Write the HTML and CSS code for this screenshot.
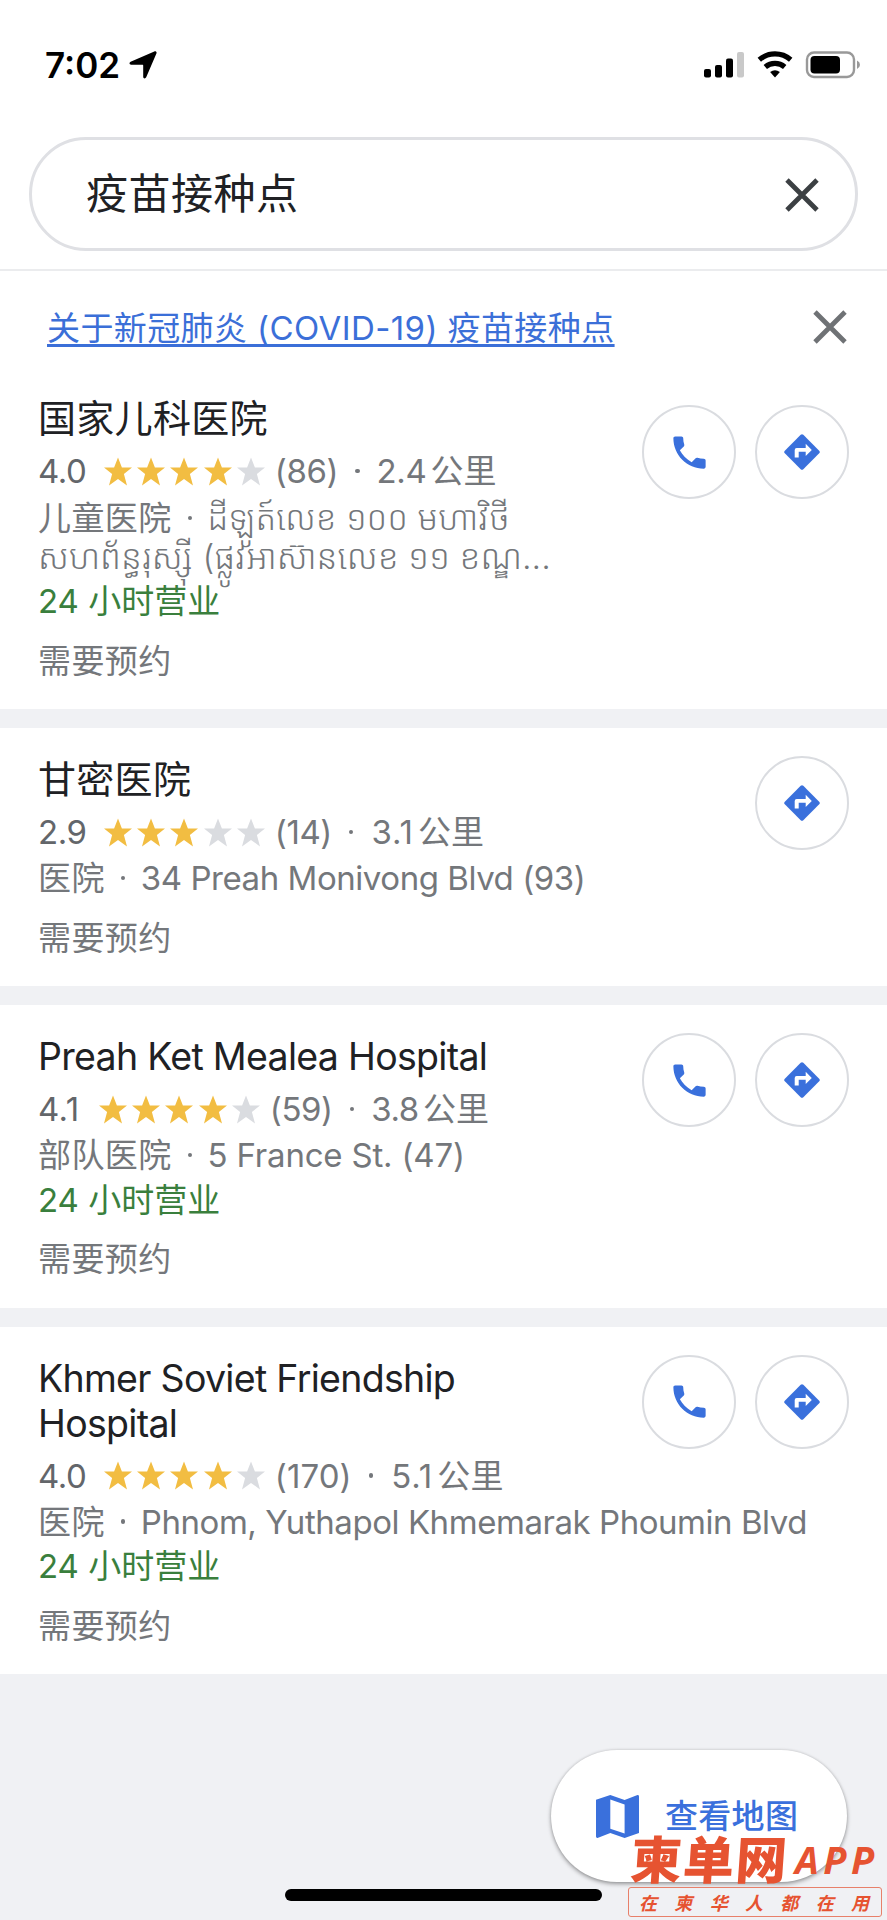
FILE: index.html
```html
<!DOCTYPE html>
<html lang="zh-CN">
<head>
<meta charset="utf-8">
<title>疫苗接种点</title>
<link rel="stylesheet" href="styles.css">
</head>
<body>
<svg class="defs" width="0" height="0">
  <symbol id="star" viewBox="0 0 28 28"><path d="M14 0l3.900 10H28l-8.100 6.500L23 28l-9-6.600L5 28l3.100-11.500L0 10h10.100z"/></symbol>
  <symbol id="phone" viewBox="0 0 24 24"><path d="M6.620 10.790c1.440 2.830 3.760 5.140 6.590 6.590l2.200-2.200c.27-.27.67-.36 1.020-.24 1.120.37 2.330.57 3.570.57.55 0 1 .45 1 1V20c0 .55-.45 1-1 1-9.390 0-17-7.610-17-17 0-.55.45-1 1-1h3.500c.55 0 1 .45 1 1 0 1.250.2 2.450.57 3.570.11.35.03.74-.25 1.020z"/></symbol>
  <symbol id="route" viewBox="0 0 36 36"><path class="route-sign" d="M16.700.8a1.900 1.900 0 0 1 2.600 0l15.900 15.900a1.900 1.900 0 0 1 0 2.600L19.300 35.200a1.900 1.900 0 0 1-2.600 0L.8 19.300a1.900 1.900 0 0 1 0-2.600z"/><path class="route-arrow" d="M10.700 23.500V16q0-2 2-2h9V9.800l6.100 6.200-6.100 6.100v-4.300h-7v5.700z"/></symbol>
</svg>

<header class="top">
  <div class="status">
    <span class="clock">7:02</span>
    <svg class="locate" viewBox="0 0 28 28"><path d="M25.300.4C27 0 28 1 27.400 2.600L17.200 26.300c-.8 1.700-3 1.400-3-.6V14.600c0-.6-.2-.8-.8-.8H2.200c-2 0-2.300-2.200-.6-3z"/></svg>
    <svg class="signals" viewBox="0 0 156 30">
      <rect x="0" y="19" width="7" height="8.500" rx="2"/>
      <rect x="11" y="15" width="7" height="12.500" rx="2"/>
      <rect x="22" y="8.500" width="7" height="19" rx="2"/>
      <rect class="faint" x="33" y="2" width="7" height="25.500" rx="2"/>
      <g class="wifi"><path d="M55.300 9.800a24 24 0 0 1 31.400 0"/><path d="M61.300 17a15 15 0 0 1 19.400 0"/></g>
      <path d="M66.100 22.100a8 8 0 0 1 9.800 0L71 27.600z"/>
      <rect class="shell" x="103" y="2.500" width="47" height="24.500" rx="7"/>
      <rect x="106.500" y="6" width="29.500" height="17.500" rx="4"/>
      <path class="nub" d="M153 10.500q3 1.500 3 4.300t-3 4.300z"/>
    </svg>
  </div>
  <div class="search">
    <span class="query">疫苗接种点</span>
    <svg class="clear" viewBox="0 0 34 34"><path d="M2 2l30 30M32 2L2 32"/></svg>
  </div>
</header>

<main>
  <div class="notice">
    <a class="notice-link">关于新冠肺炎 (COVID-19) 疫苗接种点</a>
    <svg class="dismiss" viewBox="0 0 34 34"><path d="M2 2l30 30M32 2L2 32"/></svg>
  </div>

  <section class="card first">
    <div class="info">
      <h2 class="name cjk">国家儿科医院</h2>
      <div class="rating"><span class="score">4.0</span><span class="stars"><svg><use href="#star"/></svg><svg><use href="#star"/></svg><svg><use href="#star"/></svg><svg><use href="#star"/></svg><svg class="off"><use href="#star"/></svg></span><span>(86)</span><span class="dot"></span><span>2.4</span><span class="unit">公里</span></div>
      <div class="address khmer"><div class="kline">儿童医院<span class="dot"></span><span class="km1">ដីឡូត៍លេខ ១០០ មហាវិថី</span></div><div class="kline km2">សហព័ន្ធរុស្ស៊ី (ផ្លូវអាស៊ានលេខ ១១ ខណ្ឌ...</div></div>
      <div class="hours">24 小时营业</div>
      <div class="note">需要预约</div>
    </div>
    <div class="actions"><span class="round"><svg class="i-phone"><use href="#phone"/></svg></span><span class="round"><svg class="i-route"><use href="#route"/></svg></span></div>
  </section>

  <section class="card">
    <div class="info">
      <h2 class="name cjk">甘密医院</h2>
      <div class="rating"><span class="score">2.9</span><span class="stars"><svg><use href="#star"/></svg><svg><use href="#star"/></svg><svg><use href="#star"/></svg><svg class="off"><use href="#star"/></svg><svg class="off"><use href="#star"/></svg></span><span>(14)</span><span class="dot"></span><span class="loose">3.1</span><span class="unit">公里</span></div>
      <div class="address">医院<span class="dot"></span><span class="latin">34 Preah Monivong Blvd (93)</span></div>
      <div class="note">需要预约</div>
    </div>
    <div class="actions"><span class="round"><svg class="i-route"><use href="#route"/></svg></span></div>
  </section>

  <section class="card">
    <div class="info">
      <h2 class="name">Preah Ket Mealea Hospital</h2>
      <div class="rating"><span class="score narrow">4.1</span><span class="stars"><svg><use href="#star"/></svg><svg><use href="#star"/></svg><svg><use href="#star"/></svg><svg><use href="#star"/></svg><svg class="off"><use href="#star"/></svg></span><span>(59)</span><span class="dot"></span><span>3.8</span><span class="unit">公里</span></div>
      <div class="address">部队医院<span class="dot"></span><span class="latin short">5 France St. (47)</span></div>
      <div class="hours">24 小时营业</div>
      <div class="note">需要预约</div>
    </div>
    <div class="actions"><span class="round"><svg class="i-phone"><use href="#phone"/></svg></span><span class="round"><svg class="i-route"><use href="#route"/></svg></span></div>
  </section>

  <section class="card">
    <div class="info">
      <h2 class="name">Khmer Soviet Friendship<br>Hospital</h2>
      <div class="rating"><span class="score">4.0</span><span class="stars"><svg><use href="#star"/></svg><svg><use href="#star"/></svg><svg><use href="#star"/></svg><svg><use href="#star"/></svg><svg class="off"><use href="#star"/></svg></span><span class="count-wide">(170)</span><span class="dot"></span><span class="loose">5.1</span><span class="unit">公里</span></div>
      <div class="address">医院<span class="dot"></span><span class="latin">Phnom, Yuthapol Khmemarak Phoumin Blvd</span></div>
      <div class="hours">24 小时营业</div>
      <div class="note">需要预约</div>
    </div>
    <div class="actions"><span class="round"><svg class="i-phone"><use href="#phone"/></svg></span><span class="round"><svg class="i-route"><use href="#route"/></svg></span></div>
  </section>
</main>

<div class="map-button">
  <svg class="i-map" viewBox="0 0 43 43"><path fill-rule="evenodd" d="M0 4.800L14.300 0l14.300 5L41.500 0.100Q43 0 43 1.500V38L28.600 43l-14.300-5L1.500 42.900Q0 43 0 41.500zM14.300 4.500V33.700l14.300 4.900V9.500z"/></svg>
  <span class="map-label">查看地图</span>
</div>
<div class="home-bar"></div>
<div class="mark">
  <div class="mark-title"><span class="mark-name">柬单网</span><span class="mark-app">APP</span></div>
  <div class="mark-tag"><span>在</span><span>柬</span><span>华</span><span>人</span><span>都</span><span>在</span><span>用</span></div>
</div>
</body>
</html>
```

FILE: styles.css
```css
* { box-sizing: border-box; }
body {
  margin: 0;
  position: relative;
  width: 887px;
  height: 1920px;
  overflow: hidden;
  background: #f0f1f4;
  color: #74777b;
  font-family: Inter, "Noto Sans CJK SC", "Noto Sans Khmer", "Khmer OS", sans-serif;
  font-size: 33px;
}
svg { display: block; flex: none; }
.defs { position: absolute; }

.top { height: 271px; background: #fff; border-bottom: 2px solid #ebecee; }
.status { display: flex; align-items: center; height: 137px; padding: 0 27px 7px 45px; color: #000; }
.clock { font-size: 35px; font-weight: 600; letter-spacing: 0; width: 84px; padding-bottom: 1px; }
.locate { width: 28px; height: 28px; }
.signals { width: 156px; height: 30px; margin-left: auto; }
.signals .faint { fill: #c9c9c9; }
.wifi { fill: none; stroke: #000; stroke-width: 5.2; }
.shell { fill: none; stroke: #999; stroke-width: 2.4; }
.nub { fill: #999; }
.search {
  display: flex; align-items: center; justify-content: space-between;
  height: 114px; margin: 0 29px; padding: 2px 36px 0 54px;
  border: 3px solid #dfe0e4; border-radius: 57px;
}
.query { font-size: 42px; line-height: 58px; padding-bottom: 2px; letter-spacing: 0.5px; color: #202124; }
.clear { width: 34px; height: 34px; fill: none; stroke: #3c4043; stroke-width: 4.800; }

.notice { display: flex; align-items: center; justify-content: space-between; height: 96px; padding: 22px 40px 4px 47px; background: #fff; }
.notice-link {
  font-size: 33px; line-height: 40px; color: #3b6fd8; letter-spacing: 0.4px; white-space: nowrap;
  text-decoration: underline; text-decoration-thickness: 2.500px; text-underline-offset: 4px;
}
.dismiss { width: 34px; height: 34px; fill: none; stroke: #6f7275; stroke-width: 4.800; margin-top: -3px; }

.card { display: flex; justify-content: space-between; background: #fff; padding: 29px 38px 26px 38px; margin-bottom: 19px; }
.info { white-space: nowrap; min-width: 0; flex: 1; }
.actions { display: flex; gap: 19px; height: 0; margin-top: -1px; }
.first .actions { margin-top: 9px; }
.name { margin: 0 0 8px; font-size: 37.500px; line-height: 45px; font-weight: 400; color: #202124; letter-spacing: -0.7px; }
.name.cjk { font-size: 38px; letter-spacing: 0.3px; }
.rating { display: flex; align-items: center; line-height: 44px; margin-bottom: 2px; letter-spacing: -0.4px; }
.score { color: #63666a; width: 45px; }
.score.narrow { width: 40px; letter-spacing: 0.4px; }
.stars { display: flex; gap: 5.2px; margin: 0 10px 0 21px; }
.stars svg { width: 28px; height: 31px; fill: #f2bd42; }
.stars .off { fill: #dadce0; }
.loose { margin-left: 1px; letter-spacing: 0.9px; }
.count-wide { letter-spacing: 0.1px; }
.unit { margin-left: 4px; letter-spacing: 0.2px; }
.dot { display: inline-block; width: 4.500px; height: 4.500px; margin: 0 17px; border-radius: 50%; background: currentColor; vertical-align: 10px; }
.address .dot { margin: 0 15.500px 0 16px; }
.address { letter-spacing: 0.4px; }
.address .latin { letter-spacing: -0.45px; }
.address .short { letter-spacing: -0.2px; }
.address, .hours { line-height: 44.500px; }
.kline { height: 39px; line-height: 39px; }
.km1, .km2 { font-weight: 300; letter-spacing: 0; }
.km1 { font-size: 33.700px; }
.km2 { font-size: 34.100px; }
.khmer { padding: 3px 0; }
.hours { color: #3a7f3d; }
.note { line-height: 44.500px; margin-top: 15px; letter-spacing: 0.4px; }
.round { display: flex; align-items: center; justify-content: center; width: 94px; height: 94px; border: 2.500px solid #dadce0; border-radius: 50%; background: #fff; }
.i-phone { width: 43px; height: 43px; fill: #3a70dc; }
.i-route { width: 36px; height: 36px; }
.route-sign { fill: #3a70dc; }
.route-arrow { fill: #fff; }

.map-button {
  position: absolute; left: 551px; top: 1750px; width: 296px; height: 132px;
  display: flex; align-items: center; gap: 26px; padding: 0 0 0 45px;
  border-radius: 66px; background: #fff; color: #3a70dc; font-weight: 500;
  box-shadow: 0 2px 4px rgba(0,0,0,.36), 0 0 3px rgba(0,0,0,.12);
  white-space: nowrap;
}
.map-label { padding-bottom: 5px; letter-spacing: 0.3px; }
.i-map { width: 43px; height: 43px; fill: #3a70dc; }
.home-bar { position: absolute; left: 285px; top: 1889px; width: 317px; height: 12px; border-radius: 6px; background: #000; }
.mark { position: absolute; left: 628px; top: 1830px; width: 254px; color: #e65331; }
.mark-title { display: flex; height: 57px; }
.mark-name { margin-left: 3px; font: 900 51px/54px "Noto Sans CJK SC", sans-serif; letter-spacing: 1.5px; transform: skewX(-4deg); width: 164px; }
.mark-app { font: italic 700 38px/58px "Noto Sans", sans-serif; letter-spacing: 4.500px; }
.mark-tag {
  display: flex; justify-content: space-between; align-items: center; height: 30px; padding: 0 12px 0 10px;
  border: 1px solid #e8806a; border-radius: 3px; font: italic 700 18px/28px "Noto Sans CJK SC", sans-serif;
}
```
